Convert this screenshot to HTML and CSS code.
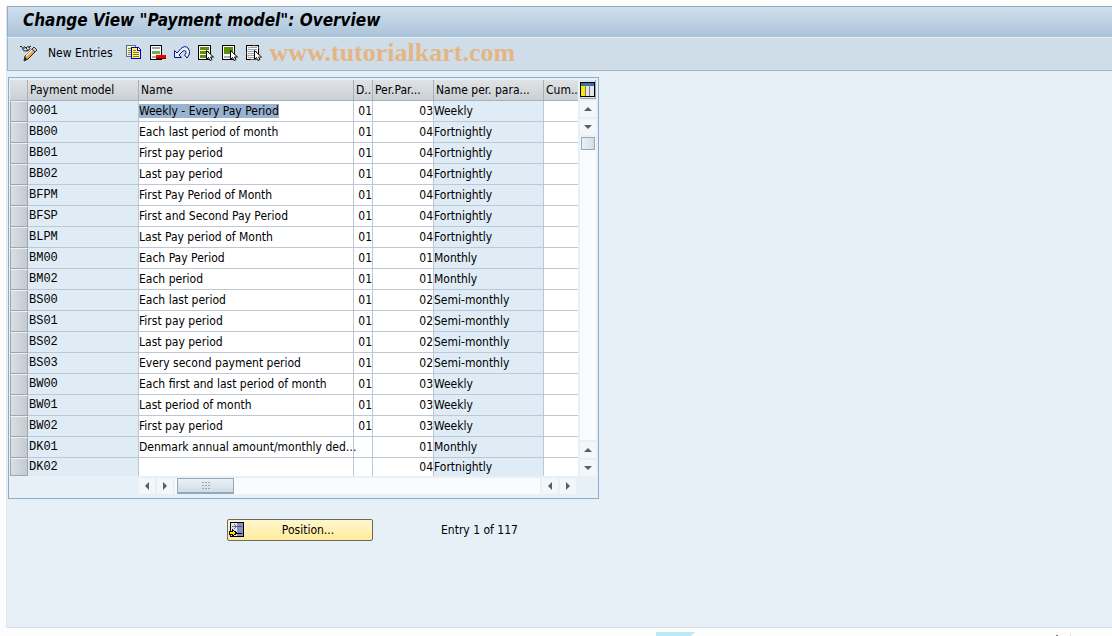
FILE: index.html
```html
<!DOCTYPE html>
<html lang="en">
<head>
  <meta charset="utf-8">
  <title>Change View "Payment model": Overview</title>
  <link rel="stylesheet" href="styles.css">
</head>
<body>
  <main class="window">
    <header class="title-bar">
      <h1>Change View "Payment model": Overview</h1>
    </header>

    <div class="toolbar">
      <button class="tool" type="button" aria-label="Display/Change">
        <svg width="18" height="18" viewBox="0 0 18 18">
          <path d="M1 3q1-2 2 0t1 3 3 1 0-3-2 1M7 4q1-2 3-1t0 3-2 0M10 3l2-1" fill="none" stroke="#222" stroke-width="1"/>
          <path d="M6 12L13 5l3 3-7 7-4 2z" fill="#f5a030" stroke="#222"/>
          <path d="M7 12l6-6" stroke="#fff" stroke-width="1.500"/>
          <path d="M13 5l2-2 3 3-2 2z" fill="#c9c4ea" stroke="#333"/>
          <path d="M5 17l1-4 2 2z" fill="#222"/>
        </svg>
      </button>
      <button class="tool new-entries" type="button">New Entries</button>
      <button class="tool" type="button" aria-label="Copy As">
        <svg width="16" height="16" viewBox="0 0 16 16" shape-rendering="crispEdges">
          <path d="M.500.500h9v11h-9z" fill="#fff79a" stroke="#5a6ab0"/>
          <path d="M2 3.500h4M2 5.500h3M2 7.500h3M2 9.500h3" stroke="#7d8468"/>
          <path d="M5.500 2.500h7l2 2v9h-9z" fill="#fff36b" stroke="#0000d0"/>
          <path d="M11.500 2.500v3h3" fill="#fff" stroke="#0000d0"/>
          <path d="M7 5.500h3M7 7.500h6M7 9.500h6M7 11.500h6" stroke="#777a55"/>
        </svg>
      </button>
      <button class="tool" type="button" aria-label="Delete">
        <svg width="16" height="16" viewBox="0 0 16 16" shape-rendering="crispEdges">
          <path d="M.500.500h11v14H.500z" fill="#fff" stroke="#000"/>
          <path d="M2 2h8v2H2zM2 11h5v2H2z" fill="#9ba9b4"/>
          <path d="M2 6h8v3H2z" fill="#7fa84a"/>
          <path d="M6 10h10v3H6z" fill="#f00000"/>
          <path d="M6 13.500h10" stroke="#700000"/>
        </svg>
      </button>
      <button class="tool" type="button" aria-label="Undo Change">
        <svg width="16" height="16" viewBox="0 0 16 16">
          <path d="M.500 5.500v7h7L5 10l4-4q1.500-1 2.500 0t0 3l-1 1 2.500 3 2-3q2-4-1-7t-7 .500L3 8z" fill="#e8eef8" stroke="#10108a"/>
        </svg>
      </button>
      <button class="tool" type="button" aria-label="Select All">
        <svg width="16" height="16" viewBox="0 0 16 16">
          <g shape-rendering="crispEdges">
            <path d="M.500.500h12v14H.500z" fill="#fff" stroke="#000"/>
            <path d="M2 2h9v3H2zM2 6h9v3H2zM2 10h9v3H2z" fill="#5d8f0a"/>
          </g>
          <path d="M8.500 5.500v9l2-2 1.500 3 2-1-1.500-2.500h3z" fill="#fff" stroke="#000"/>
        </svg>
      </button>
      <button class="tool" type="button" aria-label="Select Block">
        <svg width="16" height="16" viewBox="0 0 16 16">
          <g shape-rendering="crispEdges">
            <path d="M.500.500h12v14H.500z" fill="#fff" stroke="#000"/>
            <path d="M2 2h9v7H2z" fill="#5d8f0a"/>
            <path d="M2 11h7v2H2z" fill="#a5b1ba"/>
          </g>
          <path d="M8.500 5.500v9l2-2 1.500 3 2-1-1.500-2.500h3z" fill="#fff" stroke="#000"/>
        </svg>
      </button>
      <button class="tool" type="button" aria-label="Deselect All">
        <svg width="16" height="16" viewBox="0 0 16 16">
          <g shape-rendering="crispEdges">
            <path d="M.500.500h12v14H.500z" fill="#fff" stroke="#000"/>
            <path d="M2 2.500h9M2 4.500h9M2 6.500h9M2 8.500h9M2 10.500h7M2 12.500h7" stroke="#8fa5b5"/>
          </g>
          <path d="M8.500 5.500v9l2-2 1.500 3 2-1-1.500-2.500h3z" fill="#fff" stroke="#000"/>
          <circle cx="8" cy="8" r="7" fill="none" stroke="#e8b27c" stroke-opacity=".6"/>
        </svg>
      </button>
      <span class="site">www.tutorialkart.com</span>
    </div>

    <section class="panel">
      <div class="grid-wrap">
        <table class="grid">
          <colgroup>
            <col class="c-sel"><col class="c-model"><col class="c-name"><col class="c-d">
            <col class="c-par"><col class="c-pname"><col class="c-cum">
          </colgroup>
          <thead>
            <tr><th></th><th>Payment model</th><th>Name</th><th>D..</th><th>Per.Par...</th><th>Name per. para...</th><th>Cum..</th></tr>
          </thead>
          <tbody id="rows"></tbody>
        </table>
        <div class="vscroll">
          <button class="config" type="button" aria-label="Table settings">
            <svg width="15" height="15" viewBox="0 0 15 15" shape-rendering="crispEdges">
              <path d="M.500.500h14v14H.500z" fill="#fff" stroke="#000"/>
              <path d="M1 1h13v3H1z" fill="#2f6eb5"/>
              <path d="M1 4h4v10H1z" fill="#ffe600"/>
              <path d="M6 4h3v10H6zM10 4h4v10h-4z" fill="#e3e7ea"/>
              <path d="M5.500 1v13M9.500 1v13" stroke="#778"/>
            </svg>
          </button>
          <button class="arrow" type="button" aria-label="Scroll up"><svg width="8" height="4"><path d="M0 4h8L4 0z"/></svg></button>
          <button class="arrow" type="button" aria-label="Scroll down"><svg width="8" height="4"><path d="M0 0h8L4 4z"/></svg></button>
          <div class="vtrack"><div class="vthumb"></div></div>
          <button class="arrow" type="button" aria-label="Page up"><svg width="8" height="4"><path d="M0 4h8L4 0z"/></svg></button>
          <button class="arrow" type="button" aria-label="Page down"><svg width="8" height="4"><path d="M0 0h8L4 4z"/></svg></button>
        </div>
      </div>
      <div class="hscroll">
        <button class="arrow" type="button" aria-label="Scroll left"><svg width="4" height="8"><path d="M4 0v8L0 4z"/></svg></button>
        <button class="arrow" type="button" aria-label="Scroll right"><svg width="4" height="8"><path d="M0 0v8l4-4z"/></svg></button>
        <div class="htrack">
          <div class="hthumb">
            <svg width="8" height="7" shape-rendering="crispEdges"><path d="M0 0h2v1H0zM3 0h2v1H3zM6 0h2v1H6zM0 3h2v1H0zM3 3h2v1H3zM6 3h2v1H6zM0 6h2v1H0zM3 6h2v1H3zM6 6h2v1H6z" fill="#97a8b6"/></svg>
          </div>
        </div>
        <button class="arrow" type="button" aria-label="Page left"><svg width="4" height="8"><path d="M4 0v8L0 4z"/></svg></button>
        <button class="arrow" type="button" aria-label="Page right"><svg width="4" height="8"><path d="M0 0v8l4-4z"/></svg></button>
      </div>
    </section>

    <div class="actions">
      <button class="position" type="button">
        <svg width="16" height="16" viewBox="0 0 16 16" shape-rendering="crispEdges">
          <path d="M1.500.500h13v14h-13z" fill="#dce9f4" stroke="#000"/>
          <path d="M8 1h6v13H8z" fill="#8b90c4"/>
          <path d="M8 4.500h5" stroke="#556"/>
          <path d="M8 11.500h5" stroke="#000"/>
          <path d="M3 4.500h4M5 2l2 2.500L5 7" fill="none" stroke="#667"/>
          <path d="M.500 9.500h3v-2l4 3.500-4 3.500v-2h-3z" fill="#ffe600" stroke="#000"/>
        </svg>
        <span>Position...</span>
      </button>
      <span class="entry">Entry 1 of 117</span>
    </div>
  </main>

  <footer class="status">
    <svg width="39" height="4"><path d="M0 0h39l-4 4H0z" fill="#bde8f8"/></svg>
    <svg width="16" height="4"><path d="M0 3h2v1H0z" fill="#5f7c99"/><path d="M14 1h1v3h-1z" fill="#dde2e6"/></svg>
  </footer>
  <script src="rows.js"></script>
</body>
</html>
```
FILE: rows.js
```js
const rows = [
  ["0001", "Weekly - Every Pay Period", "01", "03", "Weekly"],
  ["BB00", "Each last period of month", "01", "04", "Fortnightly"],
  ["BB01", "First pay period", "01", "04", "Fortnightly"],
  ["BB02", "Last pay period", "01", "04", "Fortnightly"],
  ["BFPM", "First Pay Period of Month", "01", "04", "Fortnightly"],
  ["BFSP", "First and Second Pay Period", "01", "04", "Fortnightly"],
  ["BLPM", "Last Pay period of Month", "01", "04", "Fortnightly"],
  ["BM00", "Each Pay Period", "01", "01", "Monthly"],
  ["BM02", "Each period", "01", "01", "Monthly"],
  ["BS00", "Each last period", "01", "02", "Semi-monthly"],
  ["BS01", "First pay period", "01", "02", "Semi-monthly"],
  ["BS02", "Last pay period", "01", "02", "Semi-monthly"],
  ["BS03", "Every second payment period", "01", "02", "Semi-monthly"],
  ["BW00", "Each first and last period of month", "01", "03", "Weekly"],
  ["BW01", "Last period of month", "01", "03", "Weekly"],
  ["BW02", "First pay period", "01", "03", "Weekly"],
  ["DK01", "Denmark annual amount/monthly ded…", "", "01", "Monthly"],
  ["DK02", "", "", "04", "Fortnightly"]
];

const body = document.getElementById("rows");
rows.forEach((r, i) => {
  const tr = body.insertRow();
  ["sel", "model", "name", "num", "num", "pname", "cum"].forEach((cls, c) => {
    const td = tr.insertCell();
    td.className = cls;
    const text = c > 0 && c < 6 ? r[c - 1] : "";
    if (i === 0 && cls === "name") {
      const mark = document.createElement("mark");
      mark.textContent = text;
      td.appendChild(mark);
    } else {
      td.textContent = text;
    }
  });
});
```
FILE: styles.css
```css
* { box-sizing: border-box; }
body {
  margin: 0;
  background: #fdfdfe;
  color: #000;
  font: 12px/16px "DejaVu Sans Condensed", Tahoma, "DejaVu Sans", sans-serif;
  min-height: 100vh;
  padding: 6px 0 0 6px;
  display: flex;
  flex-direction: column;
}
button { font: inherit; color: inherit; padding: 0; border: 0; background: none; }
svg { display: block; flex: none; }

.window {
  flex: 1;
  background: #e7eff7;
  border-left: 1px solid #dfe8f0;
  border-bottom: 1px solid #d8e1ea;
}
.title-bar {
  height: 31px;
  padding: 3px 15px;
  border: 1px solid #93abc1;
  border-right: 0;
  border-bottom: 0;
  background: linear-gradient(#cfdfec, #aac3d9);
}
h1 {
  margin: 0;
  font: oblique bold 17px/20px "DejaVu Sans Condensed", Tahoma, sans-serif;
  white-space: nowrap;
}
.toolbar {
  height: 34px;
  display: flex;
  align-items: center;
  gap: 8px;
  padding: 0 11px 2px;
  background: #cfdde8;
  border: 1px solid #9fb5c8;
  border-top-color: #e8f0f6;
  border-right: 0;
}
.new-entries { margin: 0 5px 0 3px; white-space: nowrap; }
.site {
  font: bold 26px/28px "Liberation Serif", serif;
  color: #e5b684;
}

.panel {
  width: fit-content;
  margin: 6px 0 0 1px;
  padding: 2px 2px 2px 1px;
  border: 1px solid #8dacca;
  background: #e7eff7;
}
.grid-wrap { display: flex; gap: 2px; }
.grid {
  width: 568px;
  table-layout: fixed;
  border-collapse: separate;
  border-spacing: 0;
}
.c-sel { width: 18px; }
.c-model { width: 111px; }
.c-name { width: 215px; }
.c-d { width: 19px; }
.c-par { width: 61px; }
.c-pname { width: 110px; }
.c-cum { width: 34px; }
th, td {
  padding: 0;
  white-space: nowrap;
  border-right: 1px solid #bcc8d8;
  border-bottom: 1px solid #bcc8d8;
}
th {
  height: 21px;
  padding-left: 2px;
  font-weight: normal;
  text-align: left;
  background: linear-gradient(#dfe3e6, #cbd0d5);
  border-color: #a4b1bf;
}
td { height: 21px; background: #fff; }
th:last-child, td:last-child { border-right: 0; }
tbody tr:last-child td { height: 18px; border-bottom: 0; }
td.sel {
  background: linear-gradient(90deg, #dadfe3, #c4cad0);
  border: 1px solid #9ba6b4;
  border-top-color: #eef1f3;
}
tbody tr:last-child td.sel { border-bottom: 1px solid #9ba6b4; }
td.model, td.pname { background: #dfebf5; }
td.model { padding-left: 1px; font: 12px/16px "Liberation Mono", monospace; }
td.num { text-align: right; }
mark { background: #98b2d0; color: inherit; }

.vscroll {
  width: 16px;
  display: flex;
  flex-direction: column;
  gap: 2px;
}
.config {
  height: 19px;
  background: #dde3e8;
  border-right: 1px solid #9ba6b4;
  border-bottom: 1px solid #9ba6b4;
}
.arrow {
  width: 16px;
  height: 16px;
  display: flex;
  flex: none;
  align-items: center;
  justify-content: center;
  background: #f4f7fa;
  fill: #4c6272;
}
.vtrack { flex: 1; background: #fafbfc; }
.vthumb {
  height: 13px;
  margin: 0 1px;
  border: 1px solid #96a7b5;
  background: linear-gradient(90deg, #eaf1f6, #d0deea);
}
.hscroll {
  display: flex;
  gap: 2px;
  margin: 2px 20px 2px 129px;
}
.htrack { flex: 1; background: #fafbfc; padding-left: 2px; }
.hthumb {
  width: 57px;
  height: 16px;
  display: flex;
  align-items: center;
  justify-content: center;
  border: 1px solid #96a7b5;
  border-bottom-width: 2px;
  background: linear-gradient(#eaf1f6, #cddce8);
}

.actions {
  display: flex;
  align-items: center;
  gap: 68px;
  padding: 20px 220px;
}
.position {
  width: 146px;
  height: 22px;
  display: flex;
  align-items: center;
  padding: 0 1px;
  border: 1px solid #6c6a60;
  border-radius: 2px;
  background: linear-gradient(#fff7cf, #ffeb9a);
}
.position span { flex: 1; text-align: center; }
.entry { white-space: nowrap; }
.status {
  height: 8px;
  display: flex;
  justify-content: space-between;
  padding: 4px 40px 0 650px;
}
```
